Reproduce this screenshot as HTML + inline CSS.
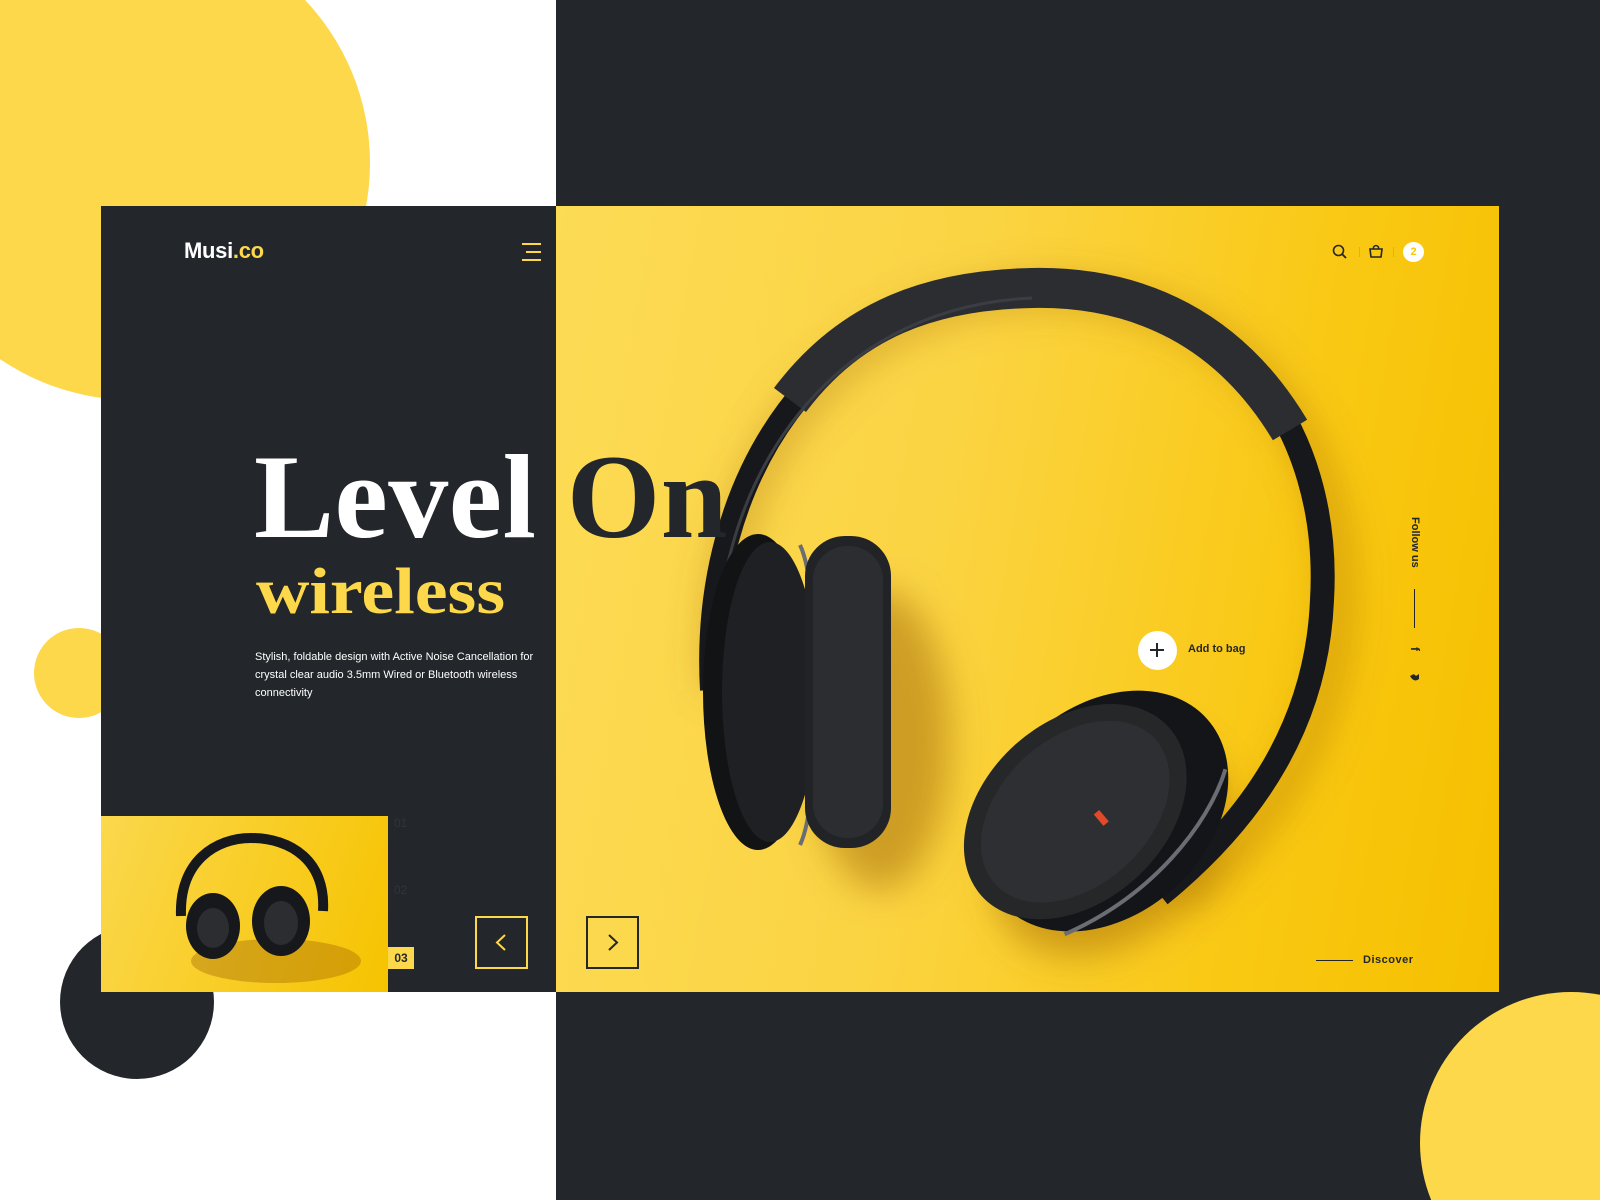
<!DOCTYPE html>
<html style="width:1600px;height:1200px;overflow:hidden"><head><meta charset="utf-8"><style>
*{margin:0;padding:0;box-sizing:border-box}
html,body{width:1600px;height:1200px;overflow:hidden}
body{background:#fff;font-family:"Liberation Sans",sans-serif}
#w{position:relative;width:1600px;height:1200px;overflow:hidden}
.abs{position:absolute}
.circ{position:absolute;border-radius:50%}
</style></head><body><div id="w">
<div class="abs" style="left:556px;top:0;width:1044px;height:1200px;background:#23272b"></div>
<div class="abs" style="left:0;top:0;width:370px;height:400px;overflow:hidden"><div class="circ" style="left:-104px;top:-74px;width:474px;height:474px;background:#fdd84b"></div></div>
<div class="circ" style="left:34px;top:628px;width:90px;height:90px;background:#fdd84b"></div>
<div class="circ" style="left:60px;top:925px;width:154px;height:154px;background:#23272b"></div>
<div class="abs" style="left:1420px;top:992px;width:180px;height:208px;overflow:hidden"><div class="circ" style="left:0;top:0;width:302px;height:302px;background:#fdd84b"></div></div>

<div class="abs" style="left:101px;top:206px;width:455px;height:786px;background:#23272b"></div>
<div class="abs" style="left:556px;top:206px;width:943px;height:786px;background:linear-gradient(100deg,#fcdb55 0%,#fbd443 40%,#f9c812 75%,#f6c000 100%);overflow:hidden">
<svg width="943" height="786" viewBox="556 206 943 786" style="position:absolute;left:0;top:0">
<defs>
<filter id="bl" x="-50%" y="-50%" width="200%" height="200%"><feGaussianBlur stdDeviation="18"/></filter>
</defs>
<ellipse cx="880" cy="740" rx="70" ry="150" fill="rgba(150,90,0,0.45)" filter="url(#bl)"/>
<ellipse cx="1110" cy="845" rx="130" ry="95" transform="rotate(-40 1110 845)" fill="rgba(150,90,0,0.45)" filter="url(#bl)"/>
<path d="M720 690 C705 480 830 300 1035 292 C1240 288 1345 440 1338 610 C1332 730 1270 830 1180 900" fill="none" stroke="rgba(150,90,0,0.35)" stroke-width="30" filter="url(#bl)"/>
<path d="M712 690 C700 480 820 292 1032 284 C1232 280 1332 430 1322 600 C1317 720 1258 815 1160 895" fill="none" stroke="#17181b" stroke-width="24"/>
<path d="M790 400 C850 320 930 290 1032 288 C1140 286 1230 330 1290 430" fill="none" stroke="#2b2d31" stroke-width="40"/>
<path d="M718 680 C708 500 815 308 1032 298" fill="none" stroke="#3a3d44" stroke-width="3"/>
<ellipse cx="758" cy="692" rx="55" ry="158" fill="#121315"/>
<ellipse cx="770" cy="692" rx="48" ry="150" fill="#1e2023"/>
<path d="M800 545 C822 590 822 800 800 845" stroke="#6a6d73" stroke-width="4" fill="none"/>
<rect x="805" y="536" width="86" height="312" rx="40" fill="#222326"/>
<rect x="813" y="546" width="70" height="292" rx="34" fill="#2c2d30"/>
<g transform="rotate(-42 1085 815)">
<ellipse cx="1102" cy="825" rx="138" ry="104" fill="#141518"/>
<ellipse cx="1080" cy="806" rx="126" ry="90" fill="#262729"/>
<ellipse cx="1080" cy="806" rx="108" ry="74" fill="#2e2f32"/>
<path d="M990 890 C1080 920 1170 905 1220 875" stroke="#6a6d73" stroke-width="4" fill="none"/>
</g>
<rect x="1098" y="810" width="7" height="15" fill="#e04a2a" transform="rotate(-40 1102 818)"/>
</svg>
</div>

<div class="abs" style="left:184px;top:238px;font-size:22px;font-weight:bold;color:#fff;letter-spacing:-0.3px">Musi<span style="color:#fdd84b">.co</span></div>
<div class="abs" style="left:522px;top:243px;width:19px;height:2px;background:#fdd84b"></div>
<div class="abs" style="left:526px;top:251px;width:15px;height:2px;background:#fdd84b"></div>
<div class="abs" style="left:522px;top:259px;width:19px;height:2px;background:#fdd84b"></div>

<div class="abs" style="left:254px;top:429px;font-family:'Liberation Serif',serif;font-weight:bold;font-size:120px;line-height:135px;white-space:nowrap;letter-spacing:0.5px"><span style="color:#fff">Level</span> <span style="color:#23272b">On</span></div>
<div class="abs" style="left:256px;top:557px;font-family:'Liberation Serif',serif;font-weight:bold;font-size:66px;line-height:70px;color:#fdd84b;transform:scaleX(1.12);transform-origin:0 0;white-space:nowrap">wireless</div>
<div class="abs" style="left:255px;top:648px;width:300px;font-size:11px;line-height:18px;color:#fff">Stylish, foldable design with Active Noise Cancellation for crystal clear audio 3.5mm Wired or Bluetooth wireless connectivity</div>

<div class="abs" style="left:101px;top:816px;width:287px;height:176px;background:linear-gradient(110deg,#fbd84d,#f6c300);overflow:hidden">
<svg width="287" height="176" viewBox="0 0 287 176">
<ellipse cx="175" cy="145" rx="85" ry="22" fill="rgba(150,90,0,0.35)"/>
<path d="M80 100 C78 45 115 22 150 22 C190 22 225 45 222 95" fill="none" stroke="#17181b" stroke-width="10"/>
<ellipse cx="112" cy="110" rx="27" ry="33" fill="#17181b"/>
<ellipse cx="112" cy="112" rx="16" ry="20" fill="#2c2d30"/>
<ellipse cx="180" cy="105" rx="29" ry="35" fill="#17181b"/>
<ellipse cx="180" cy="107" rx="17" ry="22" fill="#2c2d30"/>
</svg>
</div>
<div class="abs" style="left:394px;top:816px;font-size:12px;color:#30353b;font-family:'Liberation Sans Narrow','Liberation Sans',sans-serif">01</div>
<div class="abs" style="left:394px;top:883px;font-size:12px;color:#30353b;font-family:'Liberation Sans Narrow','Liberation Sans',sans-serif">02</div>
<div class="abs" style="left:388px;top:947px;width:26px;height:22px;background:#fdd84b;color:#23272b;font-size:12px;font-weight:bold;text-align:center;line-height:22px;font-family:'Liberation Sans Narrow','Liberation Sans',sans-serif">03</div>

<div class="abs" style="left:475px;top:916px;width:53px;height:53px;border:2px solid #fdd84b"></div>
<svg class="abs" style="left:475px;top:916px" width="53" height="53"><path d="M30 19 L22 26.5 L30 34" fill="none" stroke="#fdd84b" stroke-width="2"/></svg>
<div class="abs" style="left:586px;top:916px;width:53px;height:53px;border:2px solid #23272b"></div>
<svg class="abs" style="left:586px;top:916px" width="53" height="53"><path d="M23 19 L31 26.5 L23 34" fill="none" stroke="#23272b" stroke-width="2"/></svg>

<svg class="abs" style="left:1332px;top:244px" width="16" height="16"><circle cx="6.5" cy="6.5" r="5" fill="none" stroke="#23272b" stroke-width="1.6"/><path d="M10 10 L14 14" stroke="#23272b" stroke-width="1.8"/></svg>
<div class="abs" style="left:1359px;top:247px;width:1px;height:10px;background:rgba(0,0,0,0.1)"></div>
<svg class="abs" style="left:1368px;top:243px" width="16" height="16"><path d="M2 6 H14 L13 14 H3 Z" fill="none" stroke="#23272b" stroke-width="1.6"/><path d="M5.5 6 V4 Q8 1 10.5 4 V6" fill="none" stroke="#23272b" stroke-width="1.5"/></svg>
<div class="abs" style="left:1393px;top:247px;width:1px;height:10px;background:rgba(0,0,0,0.1)"></div>
<div class="circ" style="left:1403px;top:242px;width:21px;height:20px;background:#fff;color:#fbc900;font-size:11px;font-weight:bold;text-align:center;line-height:20px">2</div>

<div class="abs" style="left:1421px;top:517px;transform:rotate(90deg);transform-origin:0 0;font-size:11px;font-weight:bold;color:#23272b;white-space:nowrap">Follow us</div>
<div class="abs" style="left:1414px;top:589px;width:1px;height:39px;background:#23272b"></div>
<div class="abs" style="left:1410px;top:642px;transform:rotate(90deg);transform-origin:center;font-size:12px;font-weight:bold;color:#23272b;width:10px;text-align:center">f</div>
<svg class="abs" style="left:1409px;top:672px" width="11" height="11"><path d="M1 4 Q5 11 10 7 L10 2 L7 4 Q5 1 3 3 Z" fill="#23272b"/></svg>

<div class="circ" style="left:1138px;top:631px;width:39px;height:39px;background:#fff"></div>
<div class="abs" style="left:1150px;top:649px;width:14px;height:1.5px;background:#23272b"></div>
<div class="abs" style="left:1156px;top:643px;width:1.5px;height:14px;background:#23272b"></div>
<div class="abs" style="left:1188px;top:643px;font-size:11px;font-weight:bold;color:#23272b">Add to bag</div>

<div class="abs" style="left:1316px;top:960px;width:37px;height:1px;background:#23272b"></div>
<div class="abs" style="left:1363px;top:954px;font-size:11px;font-weight:bold;color:#23272b;letter-spacing:0.5px">Discover</div>
</div></body></html>
